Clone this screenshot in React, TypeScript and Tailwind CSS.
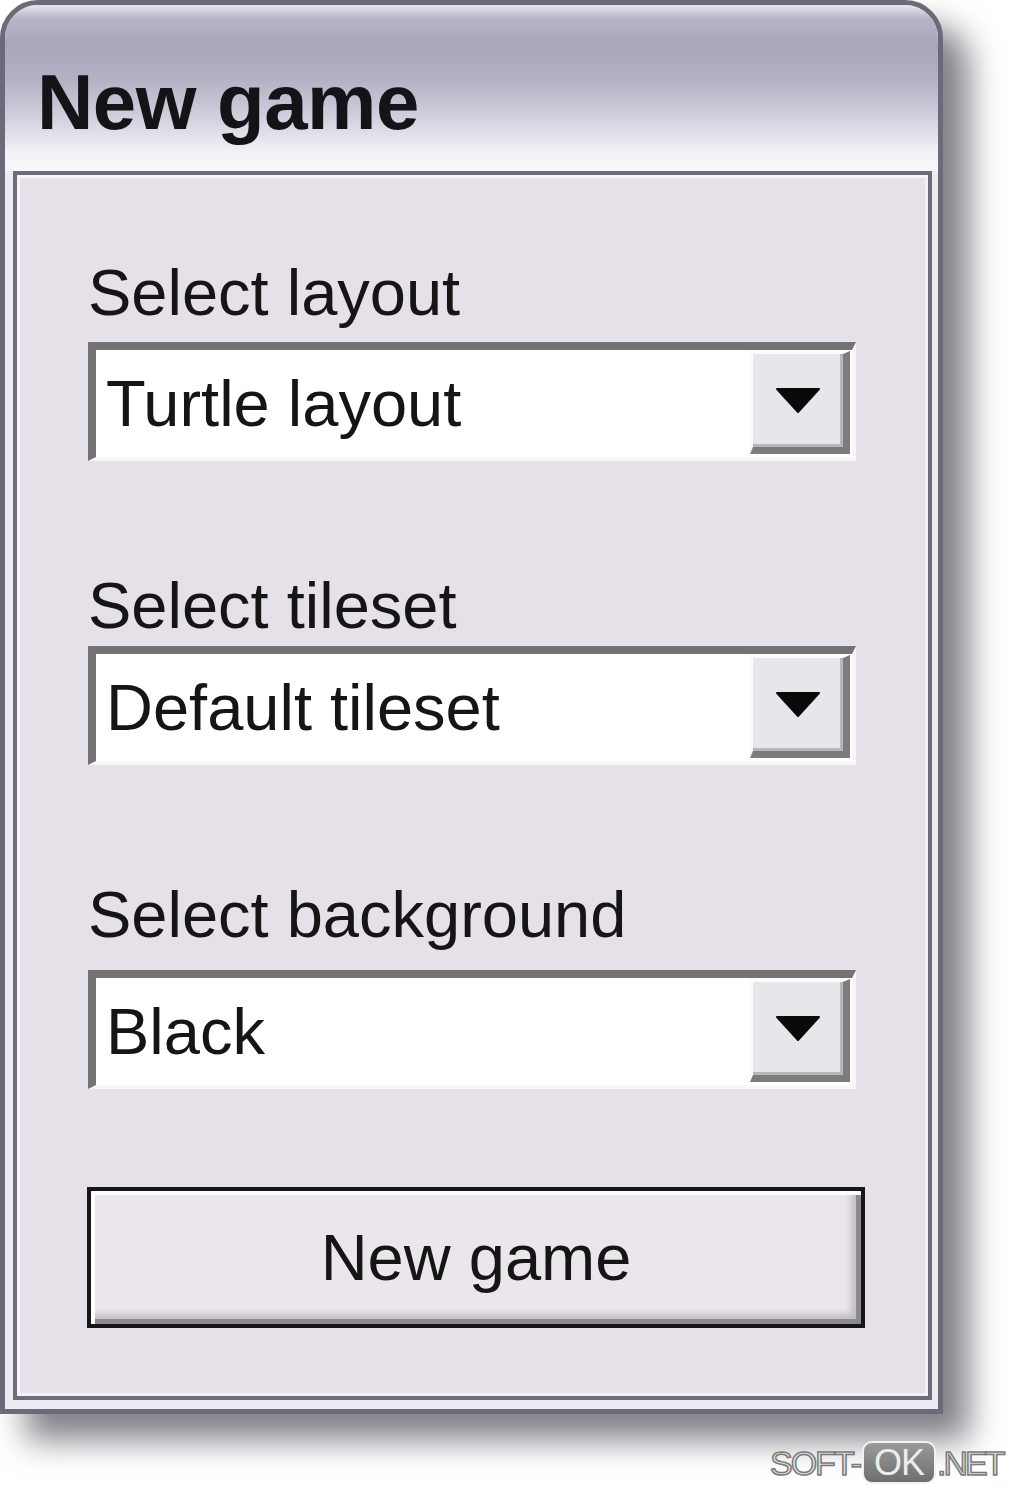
import React from "react";

function Arrow() {
  return (
    <svg width="46" height="27" viewBox="0 0 46 27" className="block">
      <path d="M2 2 L44 2 L23 25 Z" fill="#0a0a0a" stroke="#0a0a0a" strokeWidth="2" strokeLinejoin="round" />
    </svg>
  );
}

function Combo({ value }: { value: string }) {
  return (
    <div className="w-[768px] h-[119px] flex bg-white border-t-[8px] border-l-[8px] border-b-[4px] border-r-[4px] border-t-[#737373] border-l-[#737373] border-b-[#f8f6f9] border-r-[#f8f6f9]">
      <div className="flex-1 flex items-center pl-[10px] text-[65px] leading-none text-[#151515]">
        {value}
      </div>
      <div className="w-[100px] mt-[1px] mb-[3px] mr-[2px] flex items-center justify-center bg-[#e8e6ea] border-t-[3px] border-l-[3px] border-t-[#fbfbfb] border-l-[#fbfbfb] border-r-[7px] border-b-[7px] border-r-[#7c7c7c] border-b-[#7c7c7c] shadow-[inset_-3px_-3px_0_#b8b6ba]">
        <Arrow />
      </div>
    </div>
  );
}

export default function App() {
  return (
    <div className="relative min-h-[1490px] w-[1020px] bg-white overflow-hidden font-['Liberation_Sans',Arial,sans-serif]">
      <div className="w-[943px] h-[1414px] flex flex-col rounded-t-[38px] border-[5px] border-[#6c6a78] bg-[#eeecf2] shadow-[26px_26px_32px_rgba(80,80,92,0.72)]">
        <div className="h-[166px] shrink-0 rounded-t-[33px] pl-[32px] pt-[58px] bg-[linear-gradient(to_bottom,#e8e6ef_0px,#b6b4c6_14px,#a8a6b9_40px,#b3b1c4_75px,#d4d2df_115px,#f3f2f7_148px,#f8f7fa_166px)]">
          <div className="text-[78px] leading-none font-bold text-[#141418] tracking-[-0.5px]">New game</div>
        </div>
        <div className="flex-1 ml-[8px] mr-[6px] mb-[9px] border-[4px] border-[#6e6c7a] bg-[#e6e0e8] shadow-[inset_3px_3px_0_#f6f4f8,inset_-3px_-3px_0_#f3f1f5] pl-[71px] pt-[85px] flex flex-col">
          <div className="text-[65px] leading-none text-[#151515]">Select layout</div>
          <div className="mt-[17px]">
            <Combo value="Turtle layout" />
          </div>
          <div className="mt-[112px] text-[65px] leading-none text-[#151515]">Select tileset</div>
          <div className="mt-[8px]">
            <Combo value="Default tileset" />
          </div>
          <div className="mt-[117px] text-[65px] leading-none text-[#151515]">Select background</div>
          <div className="mt-[23px]">
            <Combo value="Black" />
          </div>
          <div className="mt-[98px] -ml-[1px] w-[778px] h-[141px] border-[4px] border-[#161616] bg-[#ebe6ec] flex items-center justify-center text-[65px] leading-none text-[#151515] shadow-[inset_4px_4px_0_#fdfdfd,inset_-5px_-5px_0_#8c8a8e,inset_-10px_-10px_6px_#c2bec4]">
            New game
          </div>
        </div>
      </div>

      <div className="absolute left-[770px] top-[1441px] flex items-center font-['Liberation_Sans',Arial,sans-serif]">
        <span className="text-[34px] leading-none text-[#e2e2e2] tracking-[-2px] [-webkit-text-stroke:1.5px_#7a7a7a]">SOFT-</span>
        <span className="ml-[2px] w-[74px] h-[43px] rounded-[10px] border-[2px] border-[#f2f2f2] bg-[linear-gradient(to_bottom,#9a9a9a,#6e6e6e)] flex items-center justify-center text-[36px] leading-none text-[#ececec] tracking-[-1px]">OK</span>
        <span className="ml-[1px] text-[34px] leading-none text-[#e2e2e2] tracking-[-3px] [-webkit-text-stroke:1.5px_#7a7a7a]">.NET</span>
      </div>
    </div>
  );
}
